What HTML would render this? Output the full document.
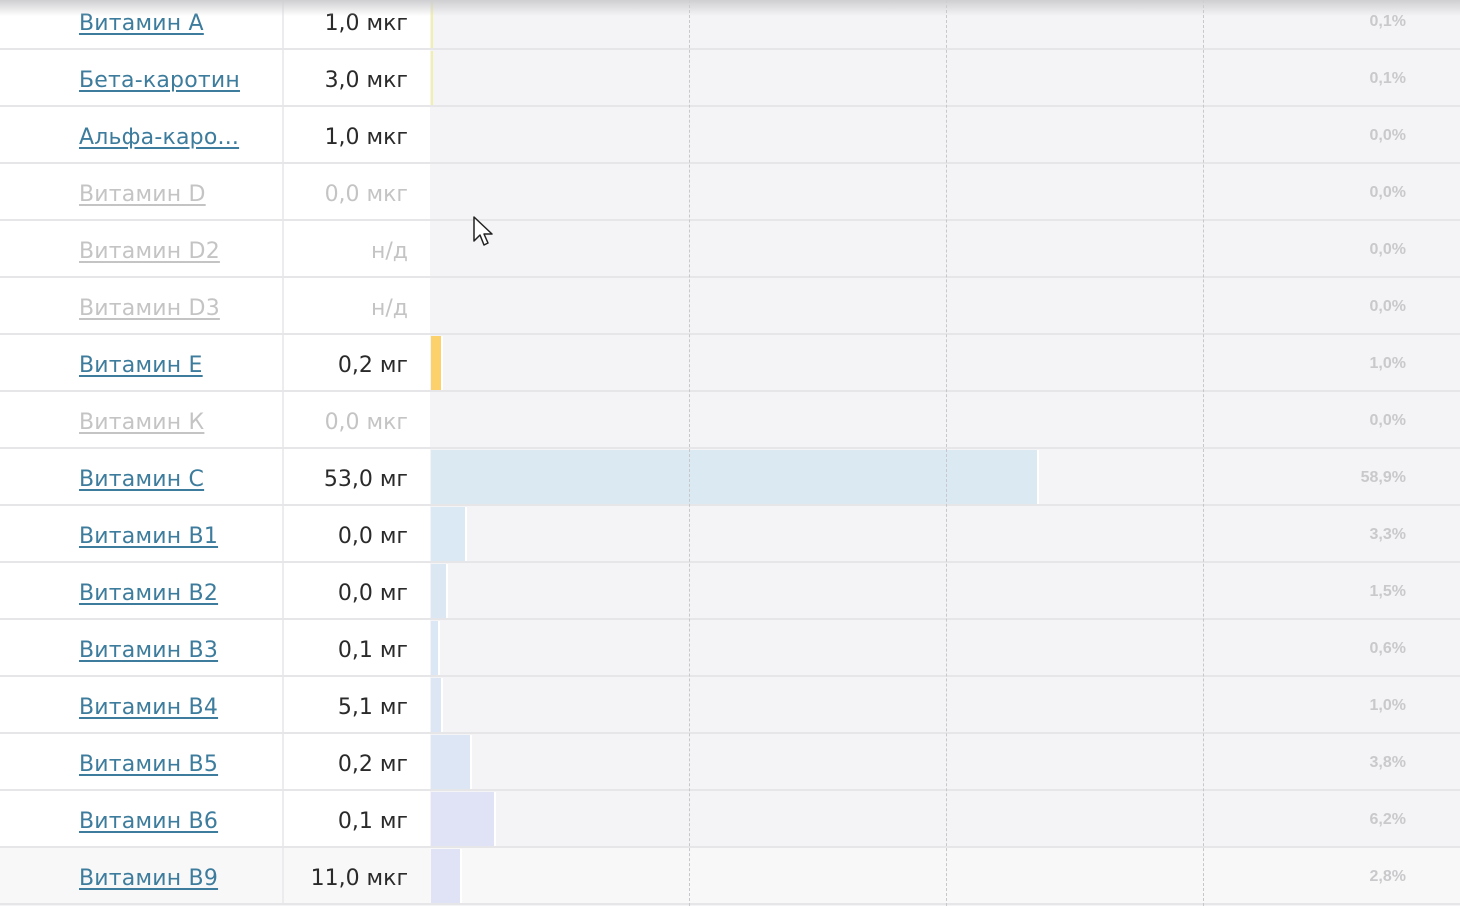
<!DOCTYPE html>
<html><head><meta charset="utf-8"><style>
body{margin:0;width:1460px;height:906px;overflow:hidden;background:#f4f4f6;font-family:"DejaVu Sans","Liberation Sans",sans-serif;position:relative}
.row{position:absolute;left:0;width:1460px;height:55px;border-bottom:2px solid #e6e6e8}
.name{position:absolute;left:0;top:0;width:282px;height:55px;background:#fff;border-right:2px solid #ececee}
.name a{position:absolute;left:79px;top:18px;font-size:22px;letter-spacing:0.2px;color:#3d7c9c;text-decoration:underline;text-underline-offset:3px;white-space:nowrap}
.val{position:absolute;left:284px;top:0;width:146px;height:55px;background:#fff}
.val span{position:absolute;right:22px;top:18px;font-size:22px;color:#2a2a2a;white-space:nowrap}
.dis a,.dis .val span{color:#c4c4c4}
.bar{position:absolute;left:431px;top:1px;height:54px;border-right:2px solid #fff}
.pct{position:absolute;right:54px;top:20px;font-size:16px;font-weight:bold;color:#c9c9cc;font-family:"Liberation Sans",sans-serif}
.dash{position:absolute;top:0;height:906px;border-left:1px dashed #c8c8cc;z-index:2}
.last .name,.last .val{background:#f8f8f8}.last{background:#f8f8f8}
.shadow{position:absolute;left:0;top:0;width:1460px;height:16px;background:linear-gradient(#cfcfd1,rgba(240,240,242,0));z-index:3}
</style></head><body>
<div class="dash" style="left:689px"></div><div class="dash" style="left:946px"></div><div class="dash" style="left:1203px"></div>

<div class="row" style="top:-7px"><div class="name"><a>Витамин А</a></div><div class="val"><span>1,0 мкг</span></div><div class="bar" style="width:2px;background:#f2f0a8;border:0"></div><div class="pct">0,1%</div></div>
<div class="row" style="top:50px"><div class="name"><a>Бета-каротин</a></div><div class="val"><span>3,0 мкг</span></div><div class="bar" style="width:2px;background:#f2f0a8;border:0"></div><div class="pct">0,1%</div></div>
<div class="row" style="top:107px"><div class="name"><a>Альфа-каро...</a></div><div class="val"><span>1,0 мкг</span></div><div class="pct">0,0%</div></div>
<div class="row dis" style="top:164px"><div class="name"><a>Витамин D</a></div><div class="val"><span>0,0 мкг</span></div><div class="pct">0,0%</div></div>
<div class="row dis" style="top:221px"><div class="name"><a>Витамин D2</a></div><div class="val"><span>н/д</span></div><div class="pct">0,0%</div></div>
<div class="row dis" style="top:278px"><div class="name"><a>Витамин D3</a></div><div class="val"><span>н/д</span></div><div class="pct">0,0%</div></div>
<div class="row" style="top:335px"><div class="name"><a>Витамин Е</a></div><div class="val"><span>0,2 мг</span></div><div class="bar" style="width:10px;background:#fcd16c"></div><div class="pct">1,0%</div></div>
<div class="row dis" style="top:392px"><div class="name"><a>Витамин К</a></div><div class="val"><span>0,0 мкг</span></div><div class="pct">0,0%</div></div>
<div class="row" style="top:449px"><div class="name"><a>Витамин С</a></div><div class="val"><span>53,0 мг</span></div><div class="bar" style="width:606px;background:#dbe9f3"></div><div class="pct">58,9%</div></div>
<div class="row" style="top:506px"><div class="name"><a>Витамин В1</a></div><div class="val"><span>0,0 мг</span></div><div class="bar" style="width:34px;background:#dbe9f4"></div><div class="pct">3,3%</div></div>
<div class="row" style="top:563px"><div class="name"><a>Витамин В2</a></div><div class="val"><span>0,0 мг</span></div><div class="bar" style="width:15px;background:#dbe8f4"></div><div class="pct">1,5%</div></div>
<div class="row" style="top:620px"><div class="name"><a>Витамин В3</a></div><div class="val"><span>0,1 мг</span></div><div class="bar" style="width:7px;background:#dbe7f5"></div><div class="pct">0,6%</div></div>
<div class="row" style="top:677px"><div class="name"><a>Витамин В4</a></div><div class="val"><span>5,1 мг</span></div><div class="bar" style="width:10px;background:#dce6f5"></div><div class="pct">1,0%</div></div>
<div class="row" style="top:734px"><div class="name"><a>Витамин В5</a></div><div class="val"><span>0,2 мг</span></div><div class="bar" style="width:39px;background:#dce6f5"></div><div class="pct">3,8%</div></div>
<div class="row" style="top:791px"><div class="name"><a>Витамин В6</a></div><div class="val"><span>0,1 мг</span></div><div class="bar" style="width:63px;background:#e0e2f5"></div><div class="pct">6,2%</div></div>
<div class="row last" style="top:848px"><div class="name"><a>Витамин В9</a></div><div class="val"><span>11,0 мкг</span></div><div class="bar" style="width:29px;background:#e0e2f5"></div><div class="pct">2,8%</div></div>

<div class="shadow"></div>
<svg style="position:absolute;left:473px;top:216px;z-index:5" width="22" height="34" viewBox="0 0 22 34"><path d="M1 1 L1 25 L7 19 L11 29 L15 27 L11 18 L19 18 Z" fill="#fff" stroke="#222" stroke-width="1.5" stroke-linejoin="round"/></svg>
</body></html>
